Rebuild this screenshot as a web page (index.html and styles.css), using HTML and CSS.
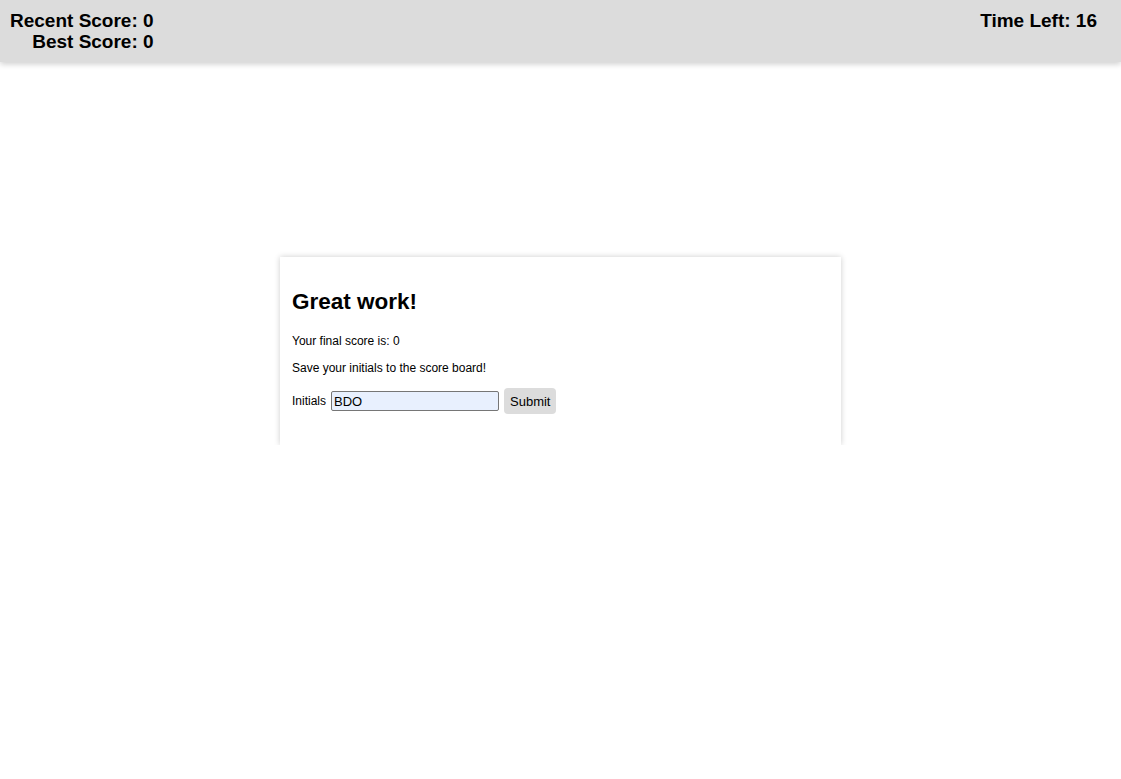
FILE: index.html
```html
<!DOCTYPE html>
<html>
<head>
<meta charset="utf-8">
<link rel="stylesheet" href="styles.css">
</head>
<body>
<header class="topbar">
  <div class="scores">
    <div>Recent Score: 0</div>
    <div>Best Score: 0</div>
  </div>
  <div class="timer">Time Left: 16</div>
</header>
<main class="main">
  <section class="card">
    <h2 class="title">Great work!</h2>
    <p class="text">Your final score is: 0</p>
    <p class="text">Save your initials to the score board!</p>
    <form class="form">
      <label class="label" for="initials">Initials</label>
      <input class="input" id="initials" type="text" value="BDO">
      <button class="btn" type="button">Submit</button>
    </form>
  </section>
</main>
</body>
</html>
```
FILE: styles.css
```css
html, body {
  margin: 0;
  padding: 0;
  background: #fff;
  font-family: "Liberation Sans", Arial, sans-serif;
  color: #000;
}
.topbar {
  display: flex;
  justify-content: space-between;
  align-items: flex-start;
  height: 62px;
  box-sizing: border-box;
  padding: 10px 24px 0 10px;
  background: #dcdcdc;
  box-shadow: 0 2px 6px rgba(0,0,0,0.2);
  font-weight: bold;
  font-size: 19px;
  line-height: 21px;
}
.scores {
  text-align: right;
}
.main {
  display: flex;
  justify-content: center;
  padding-top: 195px;
}
.card {
  width: 561px;
  box-sizing: border-box;
  padding: 14px 12px 31px;
  background: #fff;
  box-shadow: 0 0 6px rgba(0,0,0,0.2);
}
.title {
  font-size: 22.5px;
  margin: 18px 0 19px;
  line-height: 26px;
}
.text {
  font-size: 12px;
  margin: 12px 0;
  line-height: 15px;
}
.form {
  display: flex;
  align-items: center;
  font-size: 12px;
  margin-top: 12px;
}
.label {
  margin-right: 5px;
}
.input {
  width: 168px;
  height: 20px;
  box-sizing: border-box;
  margin: 0 5px 0 0;
  padding: 1px 2px;
  border: 1px solid #767676;
  border-radius: 2px;
  background: #e8f0fe;
  font-family: "Liberation Sans", Arial, sans-serif;
  font-size: 13px;
  color: #000;
}
.btn {
  height: 26px;
  padding: 0 6px;
  border: none;
  border-radius: 4px;
  background: #dcdcdc;
  font-family: "Liberation Sans", Arial, sans-serif;
  font-size: 13px;
  color: #000;
}
```
